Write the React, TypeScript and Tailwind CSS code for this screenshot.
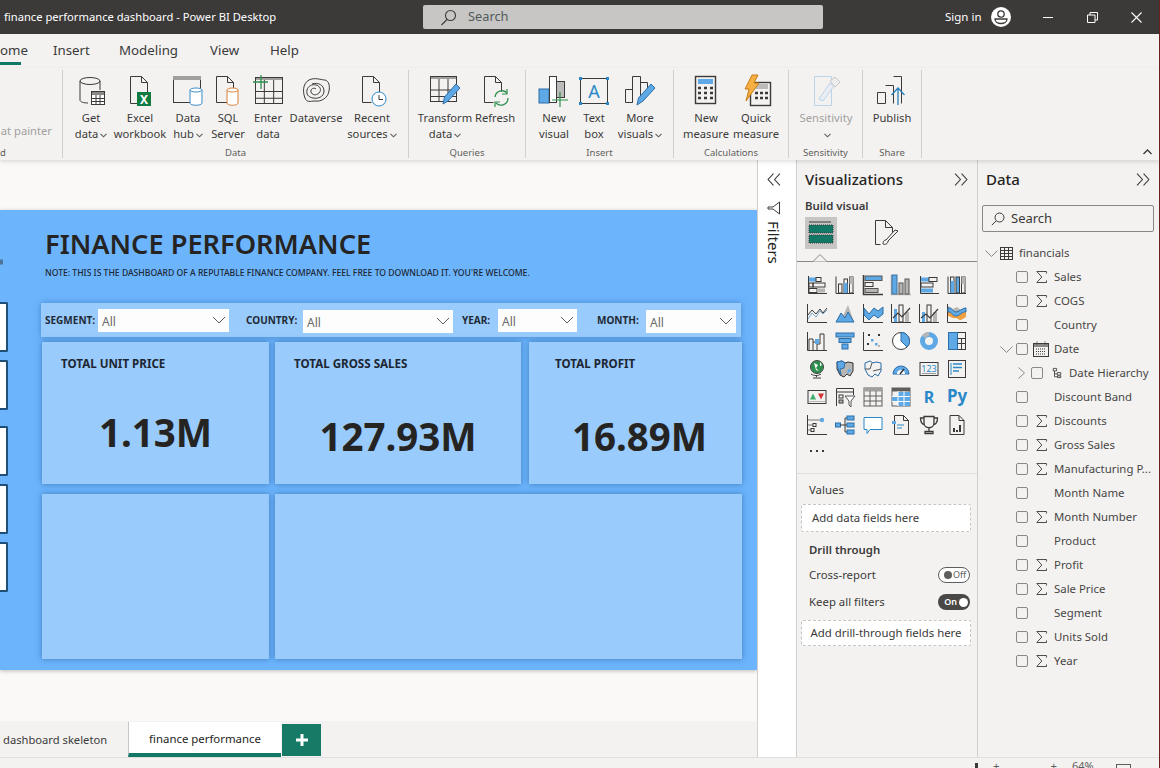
import type { ReactNode } from "react";

const D = "#3b3a39";
const B = "#5fa8e6";
const G = "#b8b6b4";
const GR = "#2f8f4e";
const FONT = '"Noto Sans", sans-serif';

function Ico({ s = 32, vb = 32, children, stroke = D }: { s?: number; vb?: number; children: ReactNode; stroke?: string }) {
  return (
    <svg width={s} height={s} viewBox={`0 0 ${vb} ${vb}`} fill="none" stroke={stroke} strokeWidth={1} className="shrink-0 overflow-visible">
      {children}
    </svg>
  );
}

const Tbl = ({ x, y, w, h }: { x: number; y: number; w: number; h: number }) => (
  <g>
    <rect x={x} y={y} width={w} height={3} fill="#a19f9d" stroke="none" />
    <rect x={x + 0.5} y={y + 0.5} width={w - 1} height={h - 1} />
    <path d={`M${x} ${y + h / 2 + 1}h${w}M${x} ${y + (h * 3) / 4 + 1}h${w}M${x + w / 3} ${y + 3}v${h - 3}M${x + (2 * w) / 3} ${y + 3}v${h - 3}`} />
  </g>
);
const Cyl = ({ x, y, w, h, c }: { x: number; y: number; w: number; h: number; c: string }) => (
  <g stroke={c}>
    <path d={`M${x} ${y + 2}v${h - 4}c0 3 ${w} 3 ${w} 0v${-(h - 4)}`} fill="#fff" />
    <ellipse cx={x + w / 2} cy={y + 2} rx={w / 2} ry={2} fill="#fff" />
  </g>
);
const Pencil = () => <path d="M14 29l1.500-7L27 9l4 4-12 13z" fill={B} stroke="#2b6ea8" />;

const ribbonIcons: Record<string, ReactNode> = {
  get: (
    <Ico>
      <path d="M5 6v19c0 2 4 3 8 3M25 6v9" />
      <ellipse cx="15" cy="6" rx="10" ry="3.500" />
      <rect x="16.500" y="16.500" width="13" height="13" fill="#fff" />
      <rect x="17" y="17" width="12" height="3" fill="#8a8886" stroke="none" />
      <path d="M17 23.500h12M17 26.500h12M21 20v9M25 20v9" />
    </Ico>
  ),
  excel: (
    <Ico>
      <path d="M6.500 1.500h11l6 6v11M17.500 1.500v6h6M6.500 1.500v27h7" />
      <rect x="13" y="17" width="14" height="14" fill="#107c41" stroke="none" />
      <text x="20" y="28.500" textAnchor="middle" fontSize="12" fontWeight="700" fill="#fff" stroke="none" fontFamily={FONT}>X</text>
    </Ico>
  ),
  hub: (
    <Ico>
      <rect x="1.500" y="1.500" width="27" height="26" />
      <rect x="1" y="1" width="28" height="4" fill="#a19f9d" stroke="none" />
      <Cyl x={18} y={13} w={12} h={17} c="#3c8dc5" />
    </Ico>
  ),
  sql: (
    <Ico>
      <path d="M4.500 1.500h11l6 6v20h-17zM15.500 1.500v6h6" />
      <Cyl x={15} y={13} w={11} h={17} c="#d9803a" />
    </Ico>
  ),
  enter: (
    <Ico>
      <Tbl x={3} y={2} w={28} h={27} />
      <path d="M9 0v14M1 7h15" stroke={GR} strokeWidth="1.300" />
    </Ico>
  ),
  dataverse: (
    <Ico>
      <path d="M9 5c6-3 12 0 16 0 4 1 5 6 4 11-1 7-8 11-14 10-5 0-8 2-10-3C3 18 2 9 9 5z" />
      <path d="M12 9c6-2 12 1 12 7s-6 8-11 7-7-4-6-8 5-6 9-5 6 5 3 8-7 2-8-1 3-5 5-3" />
    </Ico>
  ),
  recent: (
    <Ico>
      <path d="M6.500 1.500h11l6 6v11M17.500 1.500v6h6M6.500 1.500v26h9" />
      <circle cx="23" cy="24" r="7" stroke="#2b88c8" fill="#fff" />
      <path d="M23 20v4.500h4" />
    </Ico>
  ),
  transform: (
    <Ico>
      <Tbl x={1} y={1} w={27} h={26} />
      <Pencil />
    </Ico>
  ),
  refresh: (
    <Ico>
      <path d="M5.500 1.500h11l6 6v9M16.500 1.500v6h6M5.500 1.500v26h9" />
      <path d="M16 22a7 7 0 0 1 12-4M29 23a7 7 0 0 1-12 5" stroke={GR} strokeWidth="1.300" />
      <path d="M28 14v5h-5M16 32v-5h5" stroke={GR} strokeWidth="1.200" />
    </Ico>
  ),
  newvisual: (
    <Ico>
      <rect x="1" y="14" width="10" height="14" fill={B} stroke="#2b6ea8" />
      <rect x="11.500" y="1.500" width="7" height="26" fill="#fff" />
      <rect x="18.500" y="6.500" width="8" height="16" fill="#bdbbb9" />
      <path d="M22 17v15M14 25h16" stroke={GR} strokeWidth="1.200" />
    </Ico>
  ),
  textbox: (
    <Ico>
      <rect x="2.500" y="3.500" width="27" height="25" />
      <text x="16" y="23" textAnchor="middle" fontSize="18" fill="#2b88c8" stroke="none" fontFamily={FONT}>A</text>
      <g fill="#2b88c8" stroke="none">
        <rect x="1" y="2" width="3" height="3" />
        <rect x="28" y="2" width="3" height="3" />
        <rect x="1" y="27" width="3" height="3" />
        <rect x="28" y="27" width="3" height="3" />
      </g>
    </Ico>
  ),
  more: (
    <Ico>
      <path d="M1.500 14.500h7v13h-7zM8.500 27.500v-26h8v26M16.500 7.500h7v10" />
      <path d="M13 30l1.500-7L27 9l4 4-12 13z" fill={B} stroke="#2b6ea8" />
    </Ico>
  ),
  measure: (
    <Ico>
      <rect x="5.500" y="1.500" width="20" height="27" strokeWidth="1.400" />
      <rect x="8" y="4" width="15" height="5" fill={B} stroke="none" />
      <path d="M8 13h3M14 13h3M20 13h3M8 18h3M14 18h3M20 18h3M8 23h3M14 23h3M20 23h3" strokeWidth="2.400" />
    </Ico>
  ),
  quick: (
    <Ico>
      <rect x="10.500" y="7.500" width="20" height="23" strokeWidth="1.400" />
      <rect x="14" y="9" width="14" height="5" fill="#bdbbb9" stroke="none" />
      <path d="M15 18h3M20 18h3M25 18h3M15 23h3M20 23h3M25 23h3" strokeWidth="2.400" />
      <path d="M12 0h6l-4 8h5L6 26l3-12H5z" fill="#f5b041" stroke="#c77d16" />
    </Ico>
  ),
  sensitivity: (
    <Ico stroke="#c8d8e6">
      <path d="M4.500 1.500h17v29h-17z" stroke="#bcd4e8" />
      <path d="M9 24L20 8l4 3-11 15z" stroke="#bcd4e8" fill="#e8eef3" />
      <path d="M20 6l5-4 5 5-5 5z" stroke="#c8c6c4" fill="#eee" />
    </Ico>
  ),
  publish: (
    <Ico>
      <path d="M1.500 17.500h8v11h-8zM9.500 10.500h8v18M17.500 1.500h8v27" />
      <path d="M22 30V14M15.500 20l6.500-7 6.500 7" stroke="#2b7fb8" strokeWidth="1.300" />
    </Ico>
  ),
};

type Item = { w: number; icon: string; l1: string; l2?: string; caret?: boolean; dim?: boolean };

function RibbonItem({ w, icon, l1, l2, caret, dim }: Item) {
  return (
    <div className="flex flex-col items-center shrink-0" style={{ width: w }}>
      <div className="h-[32px] flex items-center justify-center">{ribbonIcons[icon]}</div>
      <div className={`mt-[3px] h-[16px] leading-[16px] whitespace-nowrap ${dim ? "text-[#a19f9d]" : ""}`}>{l1}</div>
      <div className={`h-[16px] leading-[16px] whitespace-nowrap flex items-center ${dim ? "text-[#a19f9d]" : ""}`}>
        {l2}
        {caret && <Caret />}
      </div>
    </div>
  );
}

function Caret() {
  return (
    <svg width="7" height="5" viewBox="0 0 7 5" fill="none" stroke="#605e5c" strokeWidth="1.100" className="ml-[2px] mt-[2px]">
      <path d="M.5 .8L3.500 3.800 6.500 .8" />
    </svg>
  );
}

function Group({ w, pl, label, items }: { w: number; pl: number; label: string; items: Item[] }) {
  return (
    <div className="shrink-0 h-[88px] mt-[2px] border-r border-[#d2d0ce] flex flex-col text-[11.200px]" style={{ width: w }}>
      <div className="flex flex-1 pt-[5px]" style={{ paddingLeft: pl }}>
        {items.map((it) => (
          <RibbonItem key={it.l1 + (it.l2 || "")} {...it} />
        ))}
      </div>
      <div className="text-center text-[9.500px] leading-[10px] text-[#605e5c]">{label}</div>
    </div>
  );
}

function Chevs({ dir = "r" }: { dir?: "r" | "l" }) {
  return (
    <svg width="14" height="13" viewBox="0 0 13 12" fill="none" stroke="#3b3a39" strokeWidth="1">
      <path d={dir === "r" ? "M1 .5L6 6 1 11.500M7 .5L12 6 7 11.500" : "M12 .5L7 6l5 5.500M6 .5L1 6l5 5.500"} />
    </svg>
  );
}

function Slicer({ label, lw, w, ml, imt = 0 }: { label: string; lw: number; w: number; ml: number; imt?: number }) {
  return (
    <>
      <div className="shrink-0 text-[10px] font-bold text-[#1f2a36] whitespace-nowrap" style={{ width: lw, marginLeft: ml }}>
        {label}
      </div>
      <div className="shrink-0 h-[23px] bg-[#fdfdfd] flex items-center justify-between pl-[4px] pr-[3px] text-[12px] text-[#6b6a69]" style={{ width: w, marginTop: imt }}>
        <span className="pt-[3px]">All</span>
        <svg width="14" height="8" viewBox="0 0 14 8" fill="none" stroke="#605e5c">
          <path d="M1 1l6 6 6-6" />
        </svg>
      </div>
    </>
  );
}

function Card({ w, ml = 0, title, value, tl, vo = 0, vt }: { w: number; ml?: number; title?: string; value?: string; tl?: number; vo?: number; vt?: number }) {
  return (
    <div className="bg-[#99cbfc] shadow-[0_0_6px_rgba(40,90,150,0.65)] h-full flex flex-col shrink-0" style={{ width: w, marginLeft: ml }}>
      {title && (
        <>
          <div className="text-[11.600px] font-bold text-[#1d2733] mt-[13px] leading-[18px]" style={{ paddingLeft: tl }}>
            {title}
          </div>
          <div className="text-[38.500px] font-bold text-[#252423] text-center leading-[50px]" style={{ marginTop: vt, paddingLeft: vo }}>
            {value}
          </div>
        </>
      )}
    </div>
  );
}

const vizIcons: ReactNode[] = [
  <><path d="M1.500 1v17.500H20" /><rect x="2" y="2.500" width="7" height="4" fill={B} stroke="none" /><rect x="9" y="2.500" width="5" height="4" /><rect x="2" y="8" width="4" height="4" /><rect x="6" y="8" width="12" height="4" /><rect x="2" y="13.500" width="8" height="4" /><rect x="10" y="13.500" width="8" height="4" fill={G} stroke="none" /></>,
  <><path d="M1 1.500v17h18" /><rect x="3.500" y="9" width="3.500" height="9" /><rect x="9" y="4" width="3.500" height="14" /><rect x="9" y="8" width="3.500" height="10" fill={B} stroke="none" /><rect x="14.500" y="2" width="3.500" height="16" /><rect x="14.500" y="2" width="3.500" height="7" fill={G} stroke="none" /></>,
  <><path d="M.5 0v19.500H20" strokeWidth="1.500" /><rect x="2" y="1" width="17" height="4.500" fill={B} stroke="#555" /><rect x="2" y="7.500" width="8" height="4" fill="none" /><rect x="2" y="13.500" width="13" height="4" fill={G} stroke="#555" /></>,
  <><path d="M.5 0v19.500H20" strokeWidth="1.500" stroke={G} /><rect x="1" y="0" width="5" height="19" fill={B} stroke="#3d6f9c" /><rect x="8" y="8" width="4" height="11" fill={G} stroke="#555" /><rect x="14" y="4" width="4" height="15" fill={G} stroke="#555" /></>,
  <><path d="M1.500 1v17.500H20" /><rect x="2" y="2.500" width="8" height="4" fill={B} stroke="none" /><rect x="10" y="2.500" width="8" height="4" /><rect x="2" y="8" width="12" height="4" /><rect x="2" y="13.500" width="12" height="4" fill={B} stroke="none" /></>,
  <><path d="M1 1.500v17h18" /><rect x="3.500" y="2" width="3.500" height="16" /><rect x="3.500" y="6" width="3.500" height="12" fill={B} stroke="none" /><rect x="9" y="2" width="3.500" height="16" fill={B} /><rect x="14.500" y="2" width="3.500" height="16" /><rect x="14.500" y="2" width="3.500" height="7" fill={G} stroke="none" /></>,
  <><path d="M.5 1v18.500H20" /><path d="M1 12l4-5 4 4 4-5 3 4 4-5" stroke="#3b3a39" /><path d="M1 16l4-6 4 4 4-6 3 3 4-4" stroke="#7aa9d0" /></>,
  <><path d="M1 19l5-9 2 3 5-11 6 17z" fill={G} stroke="none" /><path d="M1 19l5-9 4 5 3-6 6 10z" fill={B} stroke="#2b6ea8" /></>,
  <><path d="M.5 1v18.500H20" /><path d="M1 5l5 6 5-6 4 3 5-4v7l-5 4-4-3-5 5-5-5z" fill={B} stroke="#2b6ea8" /></>,
  <><path d="M.5 1v18.500H20" /><rect x="3" y="6" width="3" height="13" fill={B} stroke="none" /><rect x="8" y="2" width="4" height="17" /><rect x="14" y="9" width="4" height="10" fill={G} stroke="none" /><path d="M2 15l5-5 4 4 8-9" strokeWidth="1.200" /></>,
  <><path d="M.5 1v18.500H20" /><rect x="3" y="9" width="3" height="10" fill={B} stroke="none" /><rect x="8" y="2" width="4" height="17" /><rect x="14" y="9" width="4" height="10" fill={G} stroke="none" /><path d="M2 15l5-4 4 4 8-9" strokeWidth="1.200" /></>,
  <><path d="M.5 1v18.500H20" /><path d="M1 3l5 3 4-2 4 3 5-3v5l-5 3-4-2-4 2-5-3z" fill={G} stroke="none" /><path d="M1 9c3-1 4 4 8 4s6-5 10-4v5l-5 3c-3 0-3-2-6-2-3 1-5-2-7-2z" fill="#f0a040" stroke="none" /><path d="M1 5c4-1 5 4 8 4s6-4 10-4v4c-4-1-6 4-10 4s-5-5-8-4z" fill={B} stroke="#2b6ea8" /></>,
  <><path d="M.5 1v18.500H20" /><path d="M2 19V8h4v11M6 11h4v8M10 13h3V3h4v16" /><rect x="8" y="8" width="4" height="5" fill={B} stroke="none" /></>,
  <><rect x="1" y="2" width="18" height="4" fill={B} stroke="#2b6ea8" /><rect x="4" y="7.500" width="12" height="4" fill={B} stroke="#2b6ea8" /><rect x="7" y="13" width="6" height="5" fill={B} stroke="#2b6ea8" /></>,
  <><path d="M.5 1v18.500H20" /><g stroke="none"><rect x="4" y="12" width="2" height="2" fill="#333" /><rect x="8" y="8" width="2.500" height="2.500" fill={B} /><rect x="12" y="12" width="2.500" height="2.500" fill={B} /><rect x="15" y="3" width="2" height="2" fill="#333" /><rect x="5" y="3" width="2" height="2" fill="#333" /><rect x="15" y="14" width="2" height="2" fill={G} /></g></>,
  <><circle cx="10" cy="10" r="8.500" fill="#fff" /><path d="M10 10V1.500A8.500 8.500 0 0 1 16 16z" fill={B} stroke="#2b6ea8" /></>,
  <><circle cx="10" cy="10" r="6.500" stroke={B} strokeWidth="5" /><path d="M10 1a9 9 0 0 0-7 3.500l3 2.500A5 5 0 0 1 10 5z" fill={G} stroke="none" /></>,
  <><rect x="1.500" y="1.500" width="17" height="17" /><rect x="1.500" y="1.500" width="9" height="17" fill={B} stroke="#2b6ea8" /><path d="M10.500 7.500h8M14.500 7.500v11M10.500 12.500h8" /></>,
  <><circle cx="10" cy="8" r="6.500" fill={GR} stroke="#444" /><path d="M7 4l4 2-2 3 3 3-3-1zM13 3l2 3-2 1z" fill="#fff" stroke="none" /><path d="M4 15c3 2 7 2 10 0M9.500 16v2M6 19h8" /></>,
  <><path d="M2 3l5-1 3 2 3-1 5 1v8l-3 5-3-2-3 3-4-2-3-6z" fill={G} stroke="#333" /><path d="M2 3l5-1 3 2-1 5-4 1 1 6-3-6z" fill={B} stroke="#2b6ea8" /><path d="M12 15l5-4-4-1z" fill={B} stroke="none" /></>,
  <><path d="M2 4l5-2 3 2 3-1 5 1v8l-3 5-3-2-3 3-4-2-3-6z" stroke="#2b6ea8" /><path d="M2 10l5 0 2-6M10 12l8-2" stroke="#555" /></>,
  <><path d="M2 15a8 8 0 0 1 16 0z" fill={B} stroke="#2b6ea8" /><path d="M6 15a4 4 0 0 1 8 0" fill="#fff" stroke="none" /><path d="M9 15l4-5" stroke="#333" strokeWidth="1.500" /></>,
  <><rect x="1" y="3.500" width="18" height="13" /><path d="M3 14.500h14" stroke="#999" /><text x="10" y="13" textAnchor="middle" fontSize="9" fill="#2b88c8" stroke="none" fontFamily={FONT}>123</text></>,
  <><rect x="1.500" y="1.500" width="17" height="17" /><path d="M4 4v12" stroke="#2b88c8" /><path d="M6 5h9M6 8.500h9M6 12h6" stroke="#2b88c8" strokeWidth="1.300" /></>,
  <><rect x="1" y="3.500" width="18" height="13" /><path d="M2 14.500h16" stroke={G} /><path d="M6 6.500l3 6H3z" fill="#3fae6a" stroke="none" /><path d="M11 6.500h6l-3 6z" fill="#d13438" stroke="none" /></>,
  <><path d="M1.500 19V1.500h17V8M1.500 5h17" /><rect x="4" y="8" width="4" height="3" /><rect x="4" y="13" width="4" height="3" fill={G} /><path d="M10 9h10l-4 5v6l-2-2v-4z" stroke="#555" fill="#fff" /></>,
  <><rect x="1" y="1" width="18" height="18" stroke="#605e5c" /><rect x="1" y="1" width="18" height="3.500" fill="#a19f9d" stroke="none" /><path d="M1 9h18M1 14h18M7 4v15M13 4v15" stroke="#605e5c" /></>,
  <><rect x="1" y="1" width="18" height="18" stroke="#605e5c" /><rect x="1" y="1" width="18" height="3.500" fill="#605e5c" stroke="none" /><rect x="7" y="5" width="12" height="14" fill={B} stroke="none" /><rect x="1" y="10" width="6" height="4" fill={B} stroke="none" /><path d="M1 9.500h18M1 14.500h18M7 4v15M13 4v15" stroke="#fff" /></>,
  <text x="10" y="16" textAnchor="middle" fontSize="16" fontWeight="700" fill="#2b88c8" stroke="none" fontFamily={FONT}>R</text>,
  <text x="10" y="15" textAnchor="middle" fontSize="17" fontWeight="700" fill="#2b88c8" stroke="none" fontFamily={FONT}>Py</text>,
  <><path d="M.5 0v19.500H20" /><path d="M1 5h12M1 10h5M1 15h3" stroke="#777" /><circle cx="15" cy="5" r="2.200" fill={B} stroke="none" /><rect x="6" y="8.500" width="3" height="3" /><rect x="4" y="13.500" width="3" height="3" /></>,
  <><rect x=".5" y="8" width="5" height="4" fill={B} stroke="#2b6ea8" /><path d="M5 10h5M10 3v14M10 3h2M10 10h2M10 17h2" /><rect x="12" y="1" width="7" height="4" fill={B} stroke="#2b6ea8" /><rect x="12" y="8" width="7" height="4" fill={B} stroke="#2b6ea8" /><rect x="12" y="15" width="7" height="4" fill={B} stroke="#2b6ea8" /></>,
  <path d="M1 2.500h18v12H7l-3 4v-4H1z" stroke="#2b88c8" fill="#fff" />,
  <><path d="M3.500 .5h9l5 5v14h-14zM12.500 .5v5h5" /><path d="M6 10h7M6 13h5" stroke="#2b88c8" /><rect x="1" y="6" width="4" height="3" fill={B} stroke="none" /></>,
  <path d="M5 1.500h10v6c0 7-10 7-10 0zM5 3H1.500c0 4 1 6 4 7M15 3h3.500c0 4-1 6-4 7M10 13v3M6 18.500h8v-2H6z" strokeWidth="1.300" />,
  <><path d="M3 .5h9l5 5v14H3zM12 .5v5h5" /><g fill="#3b3a39" stroke="none"><rect x="6" y="13" width="2" height="4" /><rect x="9" y="15" width="2" height="2" /><rect x="12" y="10" width="2" height="7" /></g></>,
];

const fields: { name: string; sigma?: boolean; kind?: string }[] = [
  { name: "Sales", sigma: true },
  { name: "COGS", sigma: true },
  { name: "Country" },
  { name: "Date", kind: "date" },
  { name: "Date Hierarchy", kind: "hier" },
  { name: "Discount Band" },
  { name: "Discounts", sigma: true },
  { name: "Gross Sales", sigma: true },
  { name: "Manufacturing P...", sigma: true },
  { name: "Month Name" },
  { name: "Month Number", sigma: true },
  { name: "Product" },
  { name: "Profit", sigma: true },
  { name: "Sale Price", sigma: true },
  { name: "Segment" },
  { name: "Units Sold", sigma: true },
  { name: "Year", sigma: true },
];

const Check = () => <span className="w-[12px] h-[12px] border border-[#8a8886] rounded-[2px] shrink-0" />;
const ChevD = () => (
  <svg width="13" height="7" viewBox="0 0 13 7" fill="none" stroke="#8a8886"><path d="M.5 .5l6 6 6-6" /></svg>
);

function FieldRow({ f }: { f: (typeof fields)[number] }) {
  if (f.kind === "hier") {
    return (
      <div className="h-[24px] flex items-center pl-[40px]">
        <svg width="7" height="12" viewBox="0 0 7 12" fill="none" stroke="#8a8886"><path d="M.5 .5l6 5.500-6 5.500" /></svg>
        <span className="w-[6px]" />
        <Check />
        <span className="ml-[9px] mr-[7px]">
          <Ico s={10} vb={12}>
            <path d="M1.500 .5h4v3h-4zM3 3.500v7h3M3 7h3M6.500 5.500h4v3h-4zM6.500 9.500h4v2h-4z" />
          </Ico>
        </span>
        <span className="whitespace-nowrap">{f.name}</span>
      </div>
    );
  }
  return (
    <div className="h-[24px] flex items-center pl-[38px]">
      {f.kind === "date" ? <span className="-ml-[16px] mr-[3px]"><ChevD /></span> : null}
      <Check />
      <span className="w-[26px] flex justify-center shrink-0">
        {f.sigma && (
          <svg width="11" height="12" viewBox="0 0 11 12" fill="none" stroke="#3b3a39" strokeWidth="0.9"><path d="M10.500 2.500V.5H.8l5 5.500-5 5.500h9.700V9.500" /></svg>
        )}
        {f.kind === "date" && (
          <Ico s={16} vb={16}>
            <rect x=".5" y="2.500" width="15" height="13" />
            <rect x="1" y="3" width="14" height="3" fill="#8a8886" stroke="none" />
            <path d="M4 .5v3M12 .5v3M3 8h10M3 10.500h10M3 13h10" strokeDasharray="1 1" />
          </Ico>
        )}
      </span>
      <span className="whitespace-nowrap">{f.name}</span>
    </div>
  );
}

function Toggle({ on }: { on?: boolean }) {
  return on ? (
    <div className="w-[32px] h-[16px] rounded-full bg-[#4a4847] flex items-center justify-end pr-[2px] text-[9px] text-white font-semibold">
      <span className="mr-[2px]">On</span>
      <span className="w-[9px] h-[9px] rounded-full bg-white" />
    </div>
  ) : (
    <div className="w-[32px] h-[16px] rounded-full border border-[#605e5c] bg-white flex items-center pl-[5px] text-[9px] text-[#605e5c]">
      <span className="w-[8px] h-[8px] rounded-full bg-[#605e5c] mr-[1px] shrink-0" />
      <span>Off</span>
    </div>
  );
}

export default function App() {
  return (
    <div className="w-[1160px] h-[768px] overflow-hidden flex flex-col bg-[#f3f2f1] text-[#3b3a39] border-r border-[#6b2020] text-[11.400px]" style={{ fontFamily: FONT }}>
      {/* title bar */}
      <div className="h-[34px] shrink-0 bg-[#3b3a39] flex items-center text-white">
        <div className="w-[423px] pl-[4px] text-[11.200px] whitespace-nowrap">finance performance dashboard - Power BI Desktop</div>
        <div className="w-[400px] h-[24px] bg-[#c8c6c4] rounded-[2px] flex items-center pl-[17px] text-[#4f5b5b] text-[12.800px]">
          <svg width="17" height="17" viewBox="0 0 17 17" fill="none" stroke="#3b3a39" strokeWidth="1.100"><circle cx="10.500" cy="6.500" r="5" /><path d="M7 10.500L1.500 16" /></svg>
          <span className="ml-[11px]">Search</span>
        </div>
        <div className="ml-[122px] w-[46px] text-[11.500px]">Sign in</div>
        <svg width="20" height="20" viewBox="0 0 20 20">
          <circle cx="10" cy="10" r="10" fill="#fff" />
          <circle cx="10" cy="7" r="3.200" fill="none" stroke="#3b3a39" strokeWidth="1.300" />
          <path d="M4 12h12c0 6-12 6-12 0z" fill="none" stroke="#3b3a39" strokeWidth="1.300" />
        </svg>
        <span className="ml-[32px] w-[10px] h-px bg-white" />
        <svg width="11" height="11" viewBox="0 0 11 11" fill="none" stroke="#fff" className="ml-[34px]"><path d="M.5 3h7.500v7.500H.5zM3 3V.5h7.500V8H8" /></svg>
        <svg width="11" height="11" viewBox="0 0 11 11" fill="none" stroke="#fff" strokeWidth="1.100" className="ml-[33px]"><path d="M.5 .5l10 10M10.500 .5l-10 10" /></svg>
      </div>

      {/* ribbon tabs */}
      <div className="h-[34px] shrink-0 flex items-start text-[13.300px] overflow-hidden leading-[32px]">
        <div className="w-[53px] shrink-0 h-full">
          <div className="w-[21px] h-[28px] whitespace-nowrap text-right">ome</div>
          <div className="h-[3px] w-[21px] bg-[#117865]" />
        </div>
        <span className="w-[66px] shrink-0">Insert</span>
        <span className="w-[91px] shrink-0">Modeling</span>
        <span className="w-[60px] shrink-0">View</span>
        <span>Help</span>
      </div>

      {/* ribbon */}
      <div className="h-[92px] shrink-0 flex shadow-[0_2px_4px_rgba(0,0,0,0.12)] relative z-10 items-start">
        <div className="w-[63px] shrink-0 h-[88px] mt-[2px] border-r border-[#d2d0ce] flex flex-col justify-between overflow-hidden text-[11.200px]">
          <div className="mt-[53px] text-[#a19f9d] whitespace-nowrap text-right pr-[10px]">at painter</div>
          <div className="text-[9.500px] leading-[10px] text-[#605e5c]">d</div>
        </div>
        <Group w={346} pl={3} label="Data" items={[
          { w: 50, icon: "get", l1: "Get", l2: "data", caret: true },
          { w: 48, icon: "excel", l1: "Excel", l2: "workbook" },
          { w: 48, icon: "hub", l1: "Data", l2: "hub", caret: true },
          { w: 32, icon: "sql", l1: "SQL", l2: "Server" },
          { w: 48, icon: "enter", l1: "Enter", l2: "data" },
          { w: 48, icon: "dataverse", l1: "Dataverse" },
          { w: 64, icon: "recent", l1: "Recent", l2: "sources", caret: true },
        ]} />
        <Group w={117} pl={0} label="Queries" items={[
          { w: 72, icon: "transform", l1: "Transform", l2: "data", caret: true },
          { w: 28, icon: "refresh", l1: "Refresh" },
        ]} />
        <Group w={148} pl={8} label="Insert" items={[
          { w: 40, icon: "newvisual", l1: "New", l2: "visual" },
          { w: 40, icon: "textbox", l1: "Text", l2: "box" },
          { w: 52, icon: "more", l1: "More", l2: "visuals", caret: true },
        ]} />
        <Group w={115} pl={6} label="Calculations" items={[
          { w: 52, icon: "measure", l1: "New", l2: "measure" },
          { w: 48, icon: "quick", l1: "Quick", l2: "measure" },
        ]} />
        <Group w={74} pl={0} label="Sensitivity" items={[{ w: 74, icon: "sensitivity", l1: "Sensitivity", caret: true, dim: true }]} />
        <Group w={59} pl={0} label="Share" items={[{ w: 58, icon: "publish", l1: "Publish" }]} />
        <div className="flex-1 h-[88px] mt-[2px] flex items-end justify-end pr-[7px] pb-[3px]">
          <svg width="9" height="6" viewBox="0 0 9 6" fill="none" stroke="#3b3a39" strokeWidth="1.300"><path d="M.5 5L4.500 1l4 4" /></svg>
        </div>
      </div>

      {/* main */}
      <div className="flex-1 flex min-h-0">
        <div className="w-[757px] shrink-0 flex flex-col">
          <div className="flex-1 bg-[#faf9f8] pt-[50px] overflow-hidden">
            <div className="h-[460px] bg-[#6cb5fd] flex shadow-[0_1px_4px_rgba(0,0,0,0.25)]">
              <div className="w-[8px] shrink-0 pt-[47px]">
                <div className="h-[10px] w-[3px] bg-[#3b4a55] opacity-60 scale-y-50" />
                <div className="mt-[35px] flex flex-col">
                  {[0, 8, 16, 8, 8].map((m, i) => (
                    <div key={i} className="h-[50px] w-[8px] bg-white border-2 border-l-0 border-[#1f4e79] rounded-r-[2px]" style={{ marginTop: m }} />
                  ))}
                </div>
              </div>
              <div className="ml-[33px] w-[702px] flex flex-col">
                <div className="ml-[4px] mt-[16px] h-[36px] leading-[36px] text-[27.200px] font-semibold text-[#252423] whitespace-nowrap">FINANCE PERFORMANCE</div>
                <div className="ml-[4px] mt-[2px] h-[18px] leading-[18px] text-[8.600px] font-medium text-[#1d2733] whitespace-nowrap">NOTE: THIS IS THE DASHBOARD OF A REPUTABLE FINANCE COMPANY. FEEL FREE TO DOWNLOAD IT. YOU'RE WELCOME.</div>
                <div className="mt-[21px] h-[34px] w-[700px] bg-[#99cbfc] shadow-[0_0_6px_rgba(40,90,150,0.5)] flex items-center">
                  <Slicer label="SEGMENT:" lw={53} w={131} ml={4} />
                  <Slicer label="COUNTRY:" lw={57} w={150} ml={17} imt={2} />
                  <Slicer label="YEAR:" lw={36} w={79} ml={9} />
                  <Slicer label="MONTH:" lw={49} w={90} ml={20} imt={2} />
                </div>
                <div className="mt-[5px] h-[142px] flex ml-[1px] w-[700px]">
                  <Card w={227} title="TOTAL UNIT PRICE" value="1.13M" tl={19} vt={34} />
                  <Card w={246} ml={6} title="TOTAL GROSS SALES" value="127.93M" tl={19} vt={38} />
                  <Card w={213} ml={8} title="TOTAL PROFIT" value="16.89M" tl={26} vo={8} vt={38} />
                </div>
                <div className="mt-[10px] h-[165px] flex ml-[1px] w-[700px]">
                  <Card w={227} />
                  <Card w={467} ml={6} />
                </div>
              </div>
            </div>
          </div>
          {/* page tabs */}
          <div className="h-[36px] shrink-0 flex items-start">
            <div className="w-[128px] h-[35px] leading-[37px] pl-[3px] text-[11.200px]">dashboard skeleton</div>
            <div className="w-[153px] h-[35px] mt-[1px] bg-white border-b-[4px] border-[#117865] border-l border-l-[#c8c6c4] text-center leading-[34px] text-[#252423]">finance performance</div>
            <div className="ml-[1px] mt-[3px] w-[39px] h-[32px] bg-[#177a66] flex items-center justify-center">
              <svg width="12" height="12" viewBox="0 0 12 12" fill="none" stroke="#fff" strokeWidth="3"><path d="M6 0v12M0 6h12" /></svg>
            </div>
          </div>
        </div>

        {/* filters rail */}
        <div className="w-[40px] shrink-0 bg-white border-l border-r border-[#d2d0ce] flex flex-col items-center pt-[13px] pr-[6px]">
          <Chevs dir="l" />
          <svg width="14" height="14" viewBox="0 0 14 14" fill="none" stroke="#3b3a39" className="mt-[15px]"><path d="M12.500 1v12L6 8H1V6h5z" /></svg>
          <div className="mt-[6px] text-[15px] leading-[18px] text-[#252423]" style={{ writingMode: "vertical-rl" }}>Filters</div>
        </div>

        {/* visualizations */}
        <div className="w-[181px] shrink-0 border-r border-[#d2d0ce] flex flex-col">
          <div className="h-[38px] flex items-center justify-between pl-[8px] pr-[9px] text-[15px] font-medium text-[#252423]">
            <span>Visualizations</span>
            <Chevs />
          </div>
          <div className="h-[16px] leading-[16px] pl-[8px] font-semibold text-[#3b3a39]">Build visual</div>
          <div className="mt-[3px] h-[32px] flex items-center pl-[8px]">
            <div className="w-[32px] h-[32px] bg-[#c8c6c4] flex items-center justify-center">
              <svg width="26" height="26" viewBox="0 0 26 26">
                <path d="M1 2h22" stroke="#3b3a39" />
                <rect x="1" y="5" width="24" height="8" fill="#117865" stroke="#3b3a39" strokeDasharray="1 1" />
                <rect x="1" y="15" width="24" height="8" fill="#117865" stroke="#3b3a39" strokeDasharray="1 1" />
              </svg>
            </div>
            <span className="ml-[37px]">
              <svg width="26" height="26" viewBox="0 0 26 26" fill="none" stroke="#3b3a39"><path d="M1.500 .5h10l7 7v5M11.500 .5v7h7M1.500 .5v24h5" /><path d="M9 24c2 1 5 0 5-3l10-10-3-1-9 10c-3 0-3 3-3 4z" /></svg>
            </span>
          </div>
          <div className="mt-[12px] h-px bg-[#8a8886] relative">
            <svg width="14" height="8" viewBox="0 0 14 8" className="absolute left-[16px] -top-[7px]"><path d="M0 7.500L7 .5l7 7" fill="#f3f2f1" stroke="#8a8886" /></svg>
          </div>
          <div className="mt-[9px] ml-[6px] grid grid-cols-[repeat(6,28px)] auto-rows-[28px]">
            {vizIcons.map((ic, i) => (
              <div key={i} className="flex items-center justify-center">
                <Ico s={20} vb={20}>{ic}</Ico>
              </div>
            ))}
          </div>
          <div className="h-[24px] pl-[13px] flex items-center gap-[4px]">
            {[0, 1, 2].map((i) => <span key={i} className="w-[2px] h-[2px] bg-[#3b3a39]" />)}
          </div>
          <div className="mt-[10px] h-px bg-[#e1dfdd]" />
          <div className="mt-[7px] h-[18px] leading-[18px] pl-[12px] text-[#3b3a39]">Values</div>
          <div className="mt-[5px] mx-[4px] h-[28px] w-[170px] bg-white border border-dashed border-[#c8c6c4] rounded-[2px] pl-[10px] leading-[26px]">Add data fields here</div>
          <div className="mt-[9px] h-[18px] leading-[18px] pl-[12px] font-semibold">Drill through</div>
          <div className="mt-[7px] h-[18px] flex items-center justify-between pl-[12px] pr-[7px]">
            <span>Cross-report</span>
            <Toggle />
          </div>
          <div className="mt-[9px] h-[18px] flex items-center justify-between pl-[12px] pr-[7px]">
            <span>Keep all filters</span>
            <Toggle on />
          </div>
          <div className="mt-[9px] mx-[4px] h-[26px] w-[170px] bg-white border border-dashed border-[#c8c6c4] rounded-[2px] text-center leading-[24px] whitespace-nowrap">Add drill-through fields here</div>
        </div>

        {/* data pane */}
        <div className="flex-1 flex flex-col min-w-0">
          <div className="h-[38px] flex items-center justify-between pl-[8px] pr-[9px] text-[15px] font-medium text-[#252423]">
            <span>Data</span>
            <Chevs />
          </div>
          <div className="mt-[7px] ml-[4px] w-[172px] h-[27px] border border-[#8a8886] rounded-[2px] flex items-center pl-[8px]">
            <svg width="14" height="14" viewBox="0 0 14 14" fill="none" stroke="#3b3a39"><circle cx="8.500" cy="5.500" r="4.500" /><path d="M5.200 8.800L.8 13.200" /></svg>
            <span className="ml-[6px] text-[13px] pt-[1px]">Search</span>
          </div>
          <div className="mt-[9px] text-[#484644]">
            <div className="h-[24px] flex items-center pl-[7px]">
              <ChevD />
              <span className="ml-[2px] mr-[6px]">
                <Ico s={13} vb={13}>
                  <rect x=".5" y=".5" width="12" height="12" />
                  <path d="M.5 3.500h12M.5 6.500h12M.5 9.500h12M4.500 .5v12M8.500 .5v12" />
                </Ico>
              </span>
              <span>financials</span>
            </div>
            {fields.map((f) => <FieldRow key={f.name} f={f} />)}
          </div>
        </div>
      </div>

      {/* status bar */}
      <div className="h-[11px] shrink-0 border-t border-[#e1dfdd] flex items-start overflow-hidden text-[#605e5c]">
        <div className="ml-[975px] mt-[5px] w-[3px] h-[6px] bg-[#3b3a39]" />
        <span className="ml-[15px] leading-[16px]">+</span>
        <span className="ml-[51px] leading-[16px]">+</span>
        <span className="ml-[15px] text-[11px] leading-[16px]">64%</span>
        <span className="ml-[22px] mt-[6px] w-[15px] h-[6px] border-t border-l border-r border-[#605e5c]" />
      </div>
    </div>
  );
}
